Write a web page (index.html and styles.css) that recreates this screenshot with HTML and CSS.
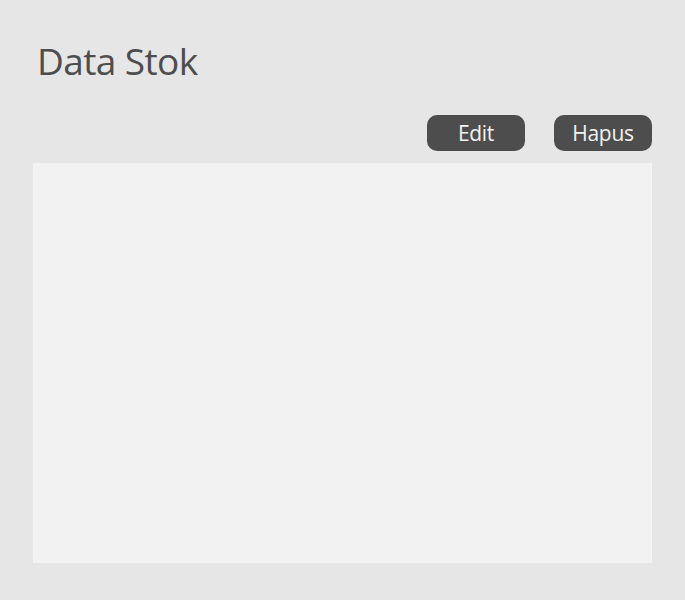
FILE: index.html
```html
<!DOCTYPE html>
<html>
<head>
<meta charset="utf-8">
<link rel="stylesheet" href="styles.css">
</head>
<body>
<div class="page">
  <h1 class="title">Data Stok</h1>
  <div class="actions">
    <button class="btn">Edit</button>
    <button class="btn">Hapus</button>
  </div>
  <div class="panel"></div>
</div>
</body>
</html>
```
FILE: styles.css
```css
html, body {
  margin: 0;
  padding: 0;
  background: #e6e6e6;
  font-family: "Open Sans", "Noto Sans", sans-serif;
}
.page {
  width: 619px;
  padding: 36px 0 0 33px;
}
.title {
  margin: 0 0 0 4px;
  font-size: 37px;
  font-weight: 400;
  line-height: 50px;
  color: #4d4d4d;
  letter-spacing: -0.6px;
}
.actions {
  display: flex;
  justify-content: flex-end;
  gap: 29px;
  margin-top: 29px;
}
.btn {
  width: 98px;
  height: 36px;
  border: none;
  border-radius: 10px;
  background: #4d4d4d;
  color: #f2f2f2;
  font-family: "Open Sans", "Noto Sans", sans-serif;
  font-size: 21px;
  letter-spacing: -0.3px;
  padding: 0;
  line-height: 36px;
}
.panel {
  margin-top: 12px;
  height: 400px;
  background: #f2f2f2;
  box-shadow: inset -1px 0 0 #f6f6f6;
}
```
